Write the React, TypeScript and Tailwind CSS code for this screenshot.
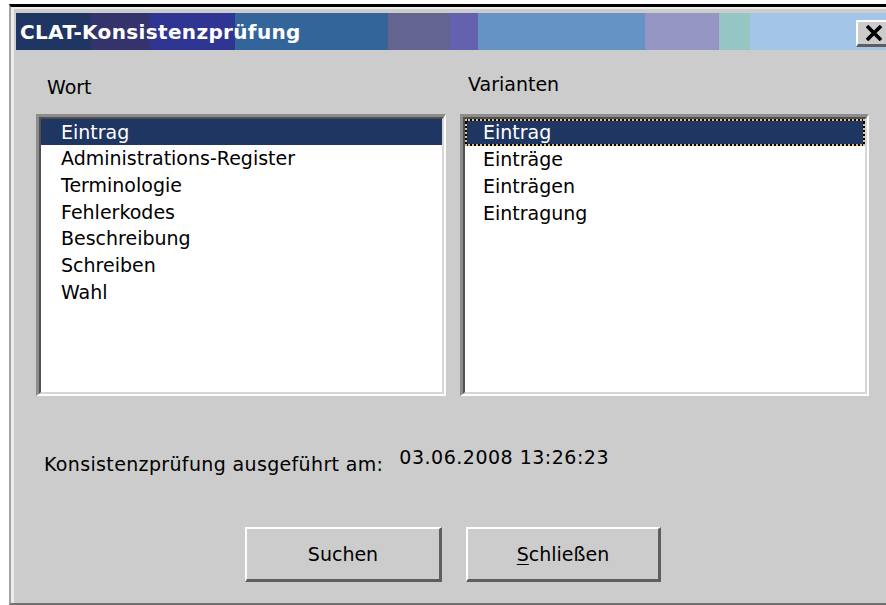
import React from "react";

const words = [
  "Eintrag",
  "Administrations-Register",
  "Terminologie",
  "Fehlerkodes",
  "Beschreibung",
  "Schreiben",
  "Wahl",
];

const variants = ["Eintrag", "Einträge", "Einträgen", "Eintragung"];

const font = { fontFamily: '"DejaVu Sans", "Liberation Sans", sans-serif' };

function ListBox({ items, focused }: { items: string[]; focused?: boolean }) {
  return (
    <div className="h-[282px] border-t-[3px] border-l-[3px] border-b-[2px] border-r-[2px] border-t-[#8c8c8c] border-l-[#8c8c8c] border-b-white border-r-white">
      <div className="h-full bg-white border-t-[2px] border-l-[2px] border-b-[2px] border-r-[2px] border-t-[#505050] border-l-[#505050] border-b-[#d6d6d6] border-r-[#d6d6d6]">
        {items.map((item, i) =>
          i === 0 ? (
            focused ? (
              <div key={item} className="bg-black">
                <div className="h-[27px] border-2 border-dotted border-[#e2c08c] bg-[#1f3562] bg-clip-padding pl-[16px] text-white leading-[23px]">
                  {item}
                </div>
              </div>
            ) : (
              <div key={item} className="h-[26px] bg-[#1f3562] pl-[20px] text-white leading-[26px]">
                {item}
              </div>
            )
          ) : (
            <div
              key={item}
              className={`h-[26.8px] leading-[26.8px] text-black ${focused ? "pl-[18px]" : "pl-[20px]"}`}
            >
              {item}
            </div>
          )
        )}
      </div>
    </div>
  );
}

function Button({ children, width }: { children: React.ReactNode; width: string }) {
  return (
    <button
      className={`${width} h-[55px] bg-[#cccccc] border-t-[2px] border-l-[2px] border-b-[3px] border-r-[3px] border-t-white border-l-white border-b-[#5e5e5e] border-r-[#5e5e5e] text-[19px] text-black flex items-center justify-center`}
      style={font}
    >
      {children}
    </button>
  );
}

export default function App() {
  return (
    <div className="w-[886px] h-[605px] bg-white overflow-hidden pt-[4px] pl-[9px]" style={font}>
      <div className="h-[601px] bg-[#cccccc] border-t-[3px] border-t-black border-l-[2px] border-l-[#a2a2a2] border-b-[2px] border-b-[#707070]">
        <div className="h-full border-t-[2px] border-l-[3px] border-[#ececec] pt-[4px] pl-[2px] flex flex-col text-[19px] text-black">
          {/* title bar */}
          <div className="h-[37px] flex items-center pl-[4px] bg-[linear-gradient(to_right,#1f3662_0px,#1f3662_75px,#35336b_75px,#35336b_134px,#2f3592_134px,#2f3592_219px,#33659a_219px,#33659a_372px,#636590_372px,#636590_434px,#6461ae_434px,#6461ae_462px,#6594c4_462px,#6594c4_629px,#9596c4_629px,#9596c4_703px,#96c6c4_703px,#96c6c4_734px,#a3c5e7_734px)]">
            <span className="text-white font-bold text-[20px] leading-none tracking-[0.35px]">CLAT-Konsistenzprüfung</span>
            <div className="ml-auto mr-[-4px] mt-[3px] w-[34px] h-[27px] bg-[#cccccc] border-t-[2px] border-l-[2px] border-t-white border-l-white border-b-[3px] border-b-[#5e5e5e] flex items-center justify-center">
              <svg width="20" height="16" viewBox="0 0 20 16">
                <path d="M3 1 L17 15 M17 1 L3 15" stroke="#000" strokeWidth="3.6" />
              </svg>
            </div>
          </div>

          {/* lists */}
          <div className="grid grid-cols-[410px_409px] gap-x-[14px] pl-[20px] mt-[25px]">
            <div className="pl-[11px] leading-[22px] mt-[1px]">Wort</div>
            <div className="pl-[8px] leading-[22px] mt-[-2px]">Varianten</div>
          </div>
          <div className="grid grid-cols-[410px_409px] gap-x-[14px] pl-[20px] mt-[16px]">
            <ListBox items={words} />
            <ListBox items={variants} focused />
          </div>

          {/* status */}
          <div className="flex items-start mt-[57px] pl-[28px] leading-[22px]">
            <span className="tracking-[0.35px]">Konsistenzprüfung ausgeführt am:</span>
            <span className="ml-[16px] mt-[-7px] tracking-[0.5px]">03.06.2008 13:26:23</span>
          </div>

          {/* buttons */}
          <div className="flex mt-[52px] pl-[229px] gap-[24px]">
            <Button width="w-[197px]">Suchen</Button>
            <Button width="w-[195px]">
              <span>
                <span className="underline underline-offset-[3px]">S</span>chließen
              </span>
            </Button>
          </div>
        </div>
      </div>
    </div>
  );
}
